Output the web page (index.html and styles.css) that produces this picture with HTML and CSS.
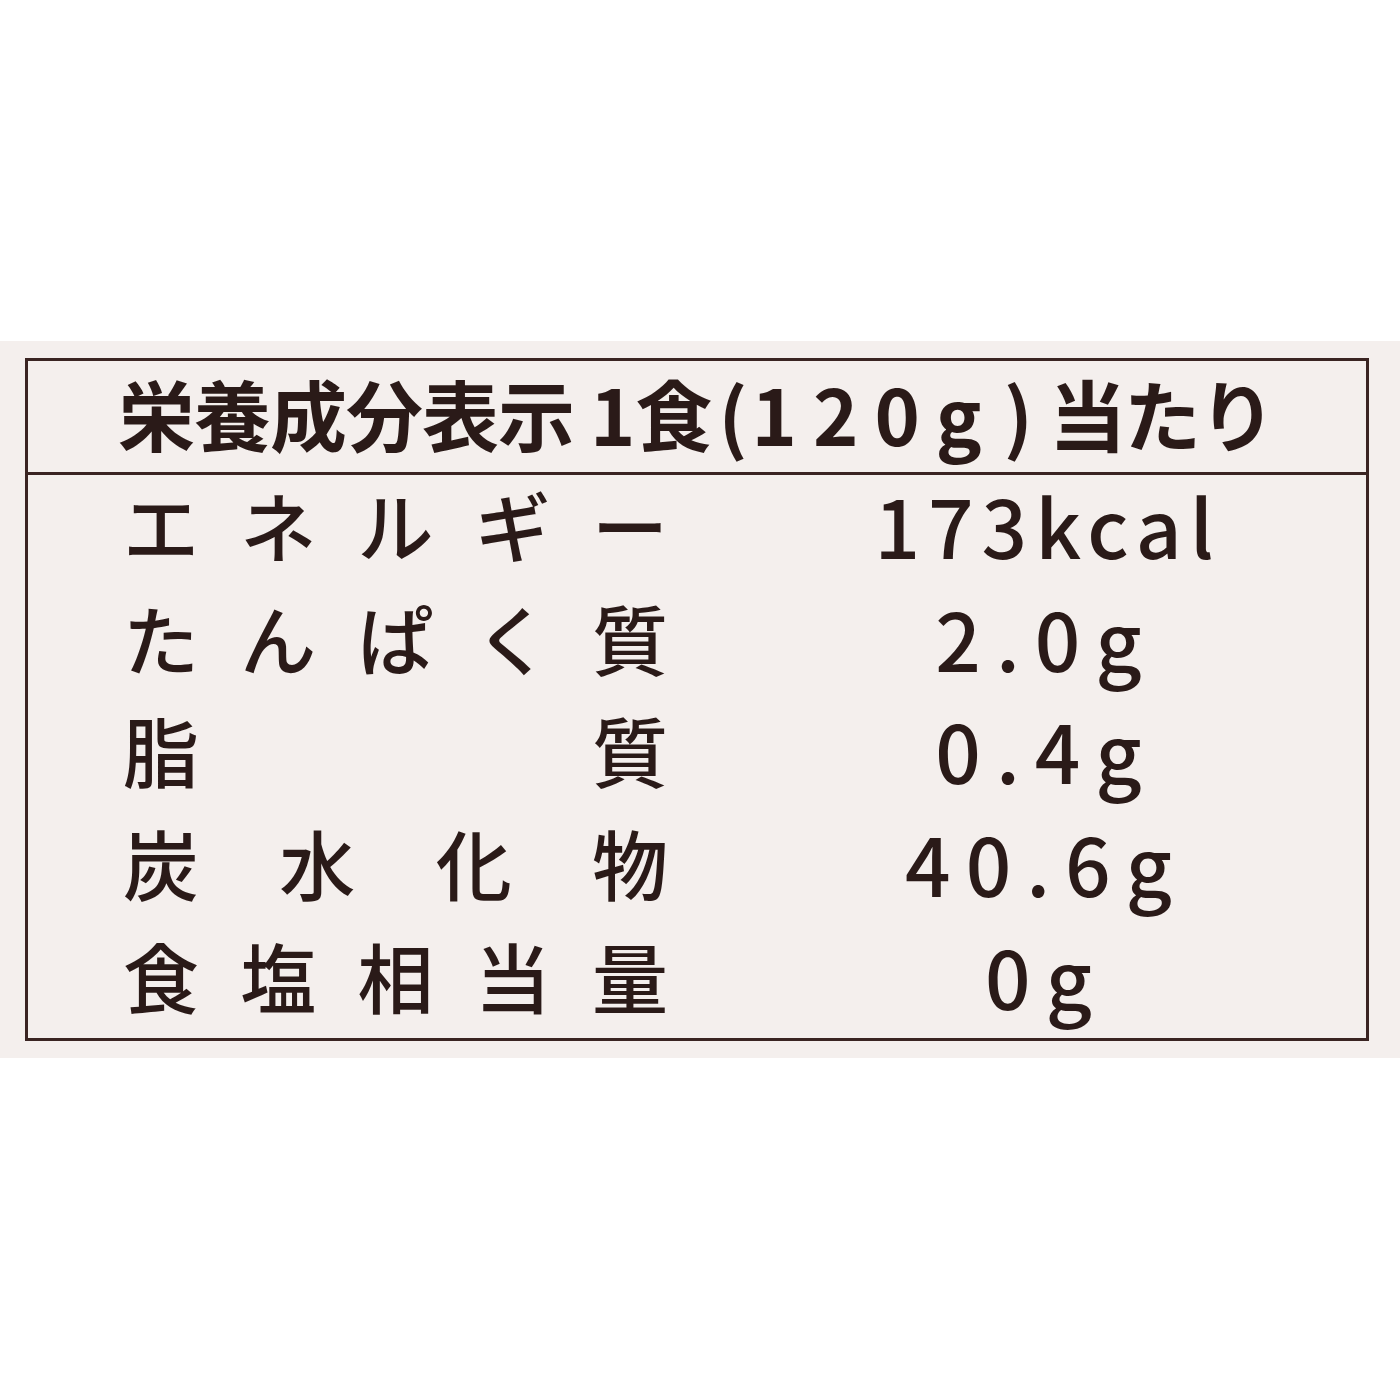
FILE: index.html
```html
<!DOCTYPE html>
<html lang="ja">
<head>
<meta charset="utf-8">
<title>栄養成分表示</title>
<link rel="stylesheet" href="styles.css">
</head>
<body>
<div class="page">
  <div class="band">
    <div class="label-box">
      <div class="head">
        <span class="h-main">栄養成分表示</span>
        <span class="h-sub">1食</span>
        <span class="h-paren">(<span class="h-num">120g</span>)</span>
        <span class="h-tail">当たり</span>
      </div>
      <div class="rows">
        <div class="row">
          <div class="name"><span>エ</span><span>ネ</span><span>ル</span><span>ギ</span><span>ー</span></div>
          <div class="val">173kcal</div>
        </div>
        <div class="row">
          <div class="name"><span>た</span><span>ん</span><span>ぱ</span><span>く</span><span>質</span></div>
          <div class="val val-wide">2.0g</div>
        </div>
        <div class="row">
          <div class="name"><span>脂</span><span>質</span></div>
          <div class="val val-wide">0.4g</div>
        </div>
        <div class="row">
          <div class="name"><span>炭</span><span>水</span><span>化</span><span>物</span></div>
          <div class="val val-wide">40.6g</div>
        </div>
        <div class="row">
          <div class="name"><span>食</span><span>塩</span><span>相</span><span>当</span><span>量</span></div>
          <div class="val val-wide">0g</div>
        </div>
      </div>
    </div>
  </div>
</div>
</body>
</html>
```
FILE: styles.css
```css
html, body {
  margin: 0;
  padding: 0;
  background: #ffffff;
}
.page {
  width: 1400px;
  height: 1400px;
  padding-top: 341px;
  box-sizing: border-box;
  font-family: "Noto Sans CJK JP", "Noto Sans", sans-serif;
  color: #2a1a18;
}
.band {
  background: #f4efed;
  height: 717px;
  padding: 17px 31px 0 25px;
  box-sizing: border-box;
}
.label-box {
  border: 3px solid #3a2422;
  height: 683px;
  box-sizing: border-box;
  display: flex;
  flex-direction: column;
}
.head {
  height: 114px;
  border-bottom: 3px solid #3a2422;
  display: flex;
  align-items: center;
  padding-left: 90px;
  padding-bottom: 8px;
  box-sizing: border-box;
  font-size: 77px;
  font-weight: 700;
  line-height: 1;
  white-space: nowrap;
}
.h-main { letter-spacing: -1px; }
.h-sub { margin-left: 16px; }
.h-paren { margin-left: 6px; }
.h-num { margin-left: 4px; margin-right: 6px; letter-spacing: 16px; }
.h-tail { margin-left: 16px; letter-spacing: -2px; }
.rows {
  flex: 1;
  display: flex;
  flex-direction: column;
}
.row {
  flex: 1;
  display: flex;
  align-items: center;
  padding-bottom: 14px;
}
.name {
  width: 545px;
  margin-left: 95px;
  display: flex;
  justify-content: space-between;
  font-size: 76px;
  font-weight: 500;
  line-height: 1;
}
.val {
  flex: 1;
  text-align: center;
  padding-left: 62px;
  font-size: 80px;
  font-weight: 500;
  letter-spacing: 8px;
  line-height: 1;
}
.val-wide {
  letter-spacing: 15px;
  padding-left: 58px;
}
```
